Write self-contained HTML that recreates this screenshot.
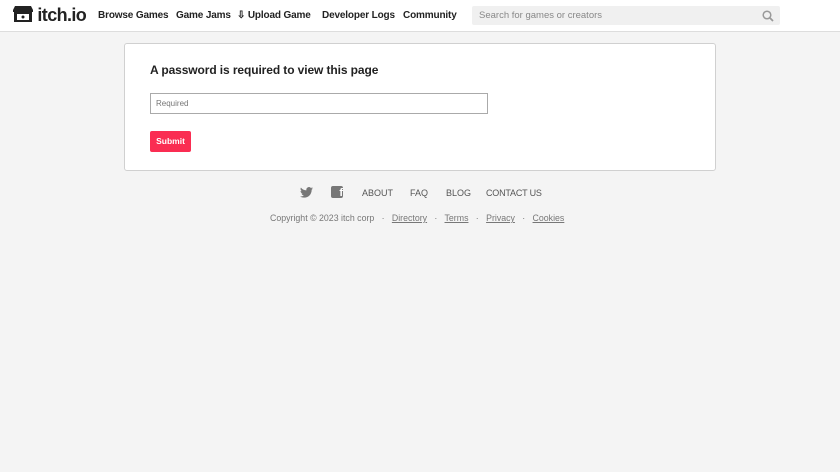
<!DOCTYPE html>
<html><head><style>
body{margin:0;background:#f4f4f4;font-family:"Liberation Sans",sans-serif;width:840px;height:472px;overflow:hidden;position:relative}
.hdr{position:absolute;left:0;top:0;width:840px;height:31px;background:#fff;border-bottom:1px solid #ddd}
.logo{position:absolute;left:13px;top:5px;font-weight:bold;font-size:18px;color:#222;letter-spacing:-0.6px}
.nav{position:absolute;top:10px;font-size:10px;font-weight:bold;color:#222;white-space:nowrap;letter-spacing:-0.15px}
.search{position:absolute;left:472px;top:6px;width:308px;height:19px;background:#f0f0f0;border-radius:2px;font-size:9.5px;color:#888}
.card{position:absolute;left:124px;top:43px;width:590px;height:126px;background:#fff;border:1px solid #d0d0d0;border-radius:3px}
h1{position:absolute;left:25px;top:19px;margin:0;font-size:12px;color:#222;letter-spacing:-0.1px}
.inp{position:absolute;left:25px;top:49px;width:331px;height:19px;border:1px solid #aaa;font-size:8px;color:#777;line-height:19px;padding-left:5px}
.btn{position:absolute;left:25px;top:87px;width:41px;height:21px;background:#fa2d52;border-radius:2px;color:#fff;font-size:8.5px;font-weight:bold;line-height:21px;text-align:center}
.f{position:absolute;font-size:9px;color:#555;white-space:nowrap}
.u{text-decoration:underline;color:#777}
</style></head><body>
<div class="hdr">
<div class="logo"><svg width="20" height="18" viewBox="0 0 20 18" style="vertical-align:-2px"><path d="M2 1h16l2 4v2H0V5z" fill="#222"/><rect x="1" y="7" width="18" height="10" fill="#222"/><rect x="4" y="9" width="12" height="6" fill="#fff"/><circle cx="10" cy="12" r="1.5" fill="#222"/></svg> itch.io</div>
<div class="nav" style="left:98px">Browse Games</div>
<div class="nav" style="left:176px">Game Jams</div>
<div class="nav" style="left:237px">⇩ Upload Game</div>
<div class="nav" style="left:322px">Developer Logs</div>
<div class="nav" style="left:403px">Community</div>
<div class="search"><span style="position:absolute;left:7px;top:4px">Search for games or creators</span><svg style="position:absolute;right:6px;top:4px" width="12" height="12" viewBox="0 0 12 12"><circle cx="5" cy="5" r="3.8" fill="none" stroke="#999" stroke-width="1.5"/><path d="M8 8l3 3" stroke="#999" stroke-width="1.8"/></svg></div>
</div>
<div class="card">
<h1>A password is required to view this page</h1>
<div class="inp">Required</div>
<div class="btn">Submit</div>
</div>
<svg style="position:absolute;left:300px;top:187px" width="13" height="11" viewBox="0 0 24 20"><path d="M24 2.4a9.8 9.8 0 0 1-2.8.8A4.9 4.9 0 0 0 23.3.4a9.8 9.8 0 0 1-3.1 1.2A4.9 4.9 0 0 0 11.8 6 14 14 0 0 1 1.7.9a4.9 4.9 0 0 0 1.5 6.6 4.9 4.9 0 0 1-2.2-.6 4.9 4.9 0 0 0 3.9 4.8 4.9 4.9 0 0 1-2.2.1 4.9 4.9 0 0 0 4.6 3.4A9.9 9.9 0 0 1 0 17.3 14 14 0 0 0 7.5 19.5c9.1 0 14-7.5 14-14v-.6A10 10 0 0 0 24 2.4z" fill="#777"/></svg>
<div class="f" style="left:331px;top:186px;width:12px;height:12px;background:#777;border-radius:2px;color:#fff;font-weight:bold;text-align:right;font-size:11px;line-height:14px">f</div>
<div class="f" style="left:362px;top:188px">ABOUT</div>
<div class="f" style="left:410px;top:188px">FAQ</div>
<div class="f" style="left:446px;top:188px">BLOG</div>
<div class="f" style="left:486px;top:188px;letter-spacing:-0.2px">CONTACT US</div>
<div class="f" style="left:270px;top:213px;color:#777;font-size:8.8px">Copyright © 2023 itch corp &nbsp; · &nbsp; <span class="u">Directory</span> &nbsp; · &nbsp; <span class="u">Terms</span> &nbsp; · &nbsp; <span class="u">Privacy</span> &nbsp; · &nbsp; <span class="u">Cookies</span></div>
</body></html>
